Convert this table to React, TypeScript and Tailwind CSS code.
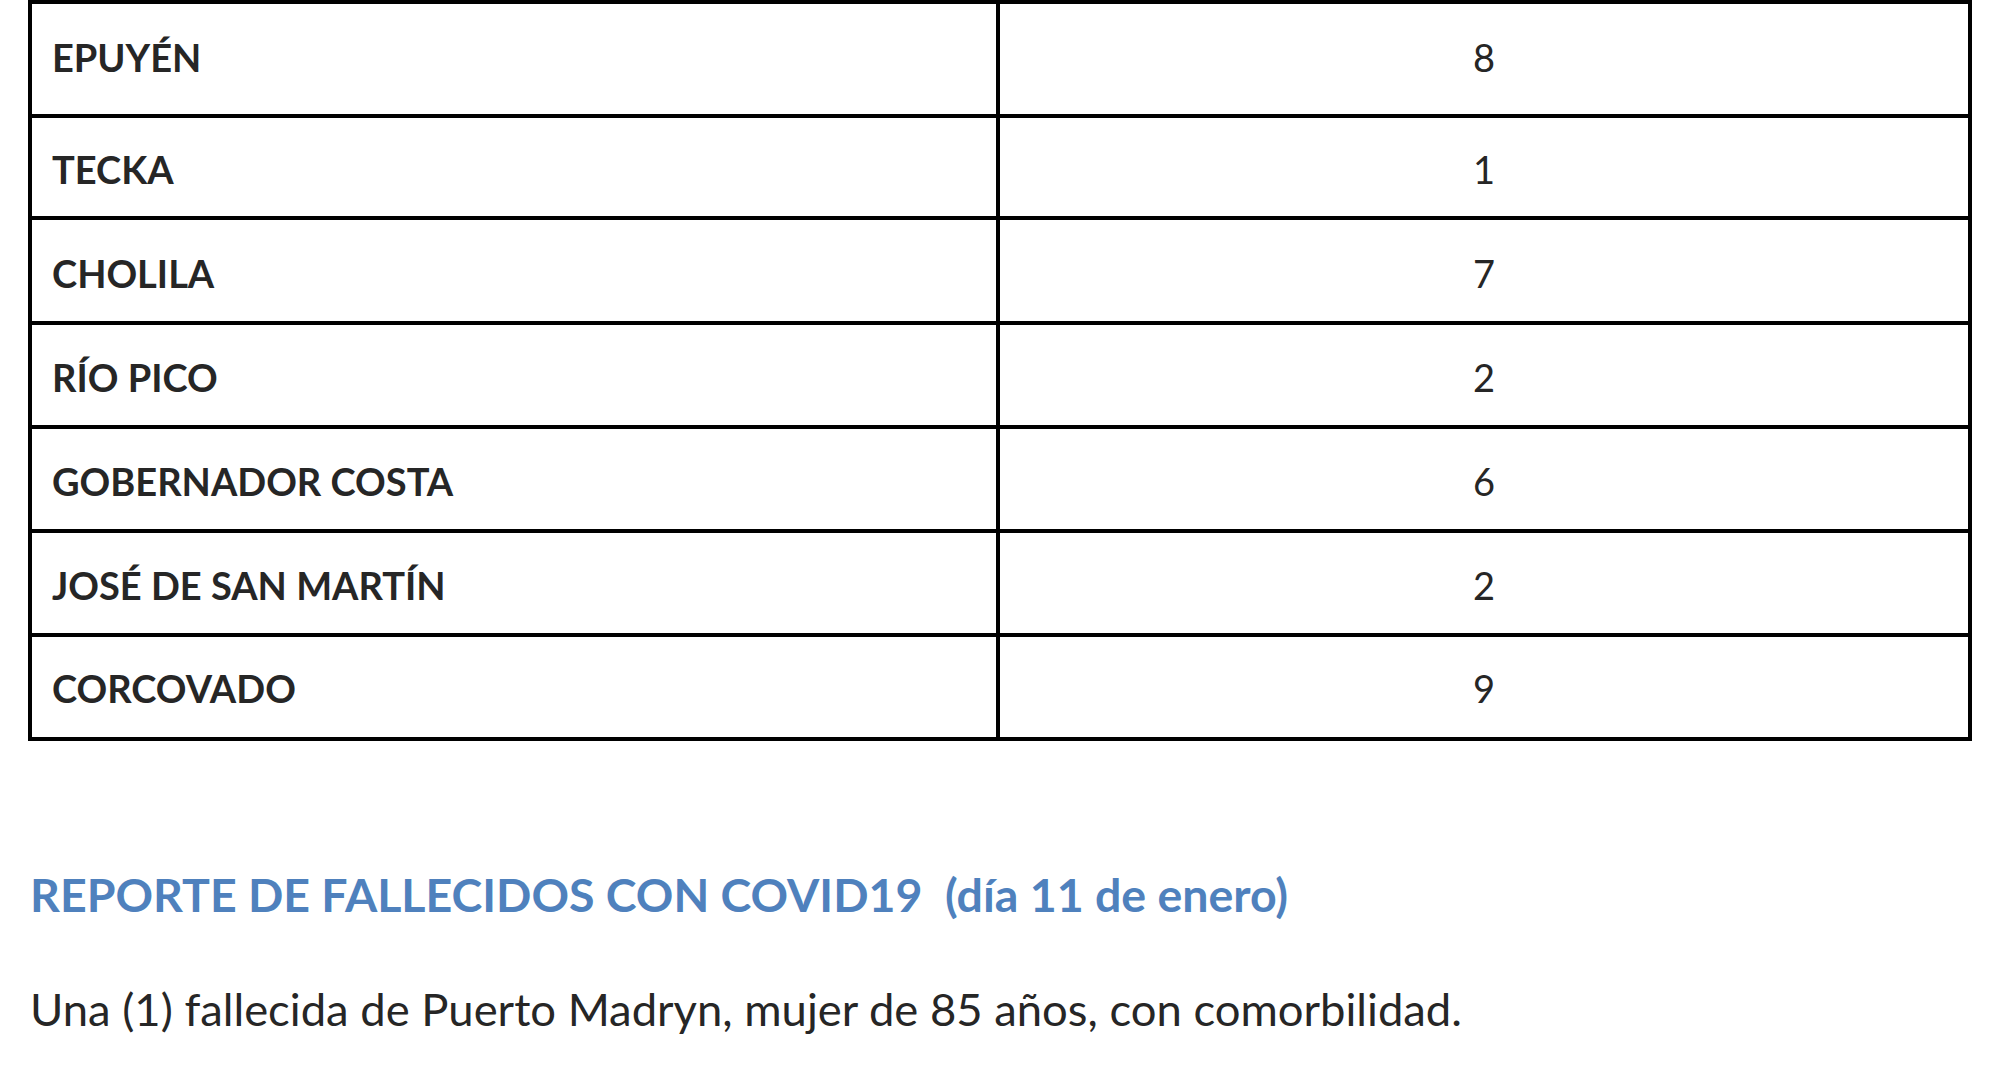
import React from "react";

const rows: { name: string; value: string; h: string; pad: string; last?: boolean }[] = [
  { name: "EPUYÉN", value: "8", h: "h-[114px]", pad: "pb-[5px]" },
  { name: "TECKA", value: "1", h: "h-[102px]", pad: "pt-[4px]" },
  { name: "CHOLILA", value: "7", h: "h-[105px]", pad: "pt-[4px]" },
  { name: "RÍO PICO", value: "2", h: "h-[104px]", pad: "pt-[4px]" },
  { name: "GOBERNADOR COSTA", value: "6", h: "h-[104px]", pad: "pt-[4px]" },
  { name: "JOSÉ DE SAN MARTÍN", value: "2", h: "h-[104px]", pad: "pt-[4px]" },
  { name: "CORCOVADO", value: "9", h: "h-[100px]", pad: "pt-[2px]", last: true },
];

export default function App() {
  return (
    <div className="w-[1995px] h-[1080px] bg-white overflow-hidden text-[#262626] font-['Lato',sans-serif]">
      <div className="ml-[28px] w-[1944px] border-4 border-black">
        {rows.map((r) => (
          <div
            key={r.name}
            className={`flex ${r.h} ${r.last ? "" : "border-b-4 border-black"}`}
          >
            <div className={`w-[968px] border-r-4 border-black flex items-center pl-[20px] ${r.pad} text-[38px] font-bold leading-none`}>
              {r.name}
            </div>
            <div className={`flex-1 flex items-center justify-center ${r.pad} text-[38px] leading-none`}>
              {r.value}
            </div>
          </div>
        ))}
      </div>
      <div className="ml-[30px] mt-[123px] h-[60px] leading-[60px] text-[46.5px] font-bold text-[#4f81bd] whitespace-pre">
        {"REPORTE DE FALLECIDOS CON COVID19  (día 11 de enero)"}
      </div>
      <div className="ml-[30px] mt-[55px] h-[60px] leading-[60px] text-[45.4px] whitespace-pre">
        Una (1) fallecida de Puerto Madryn, mujer de 85 años, con comorbilidad.
      </div>
    </div>
  );
}
